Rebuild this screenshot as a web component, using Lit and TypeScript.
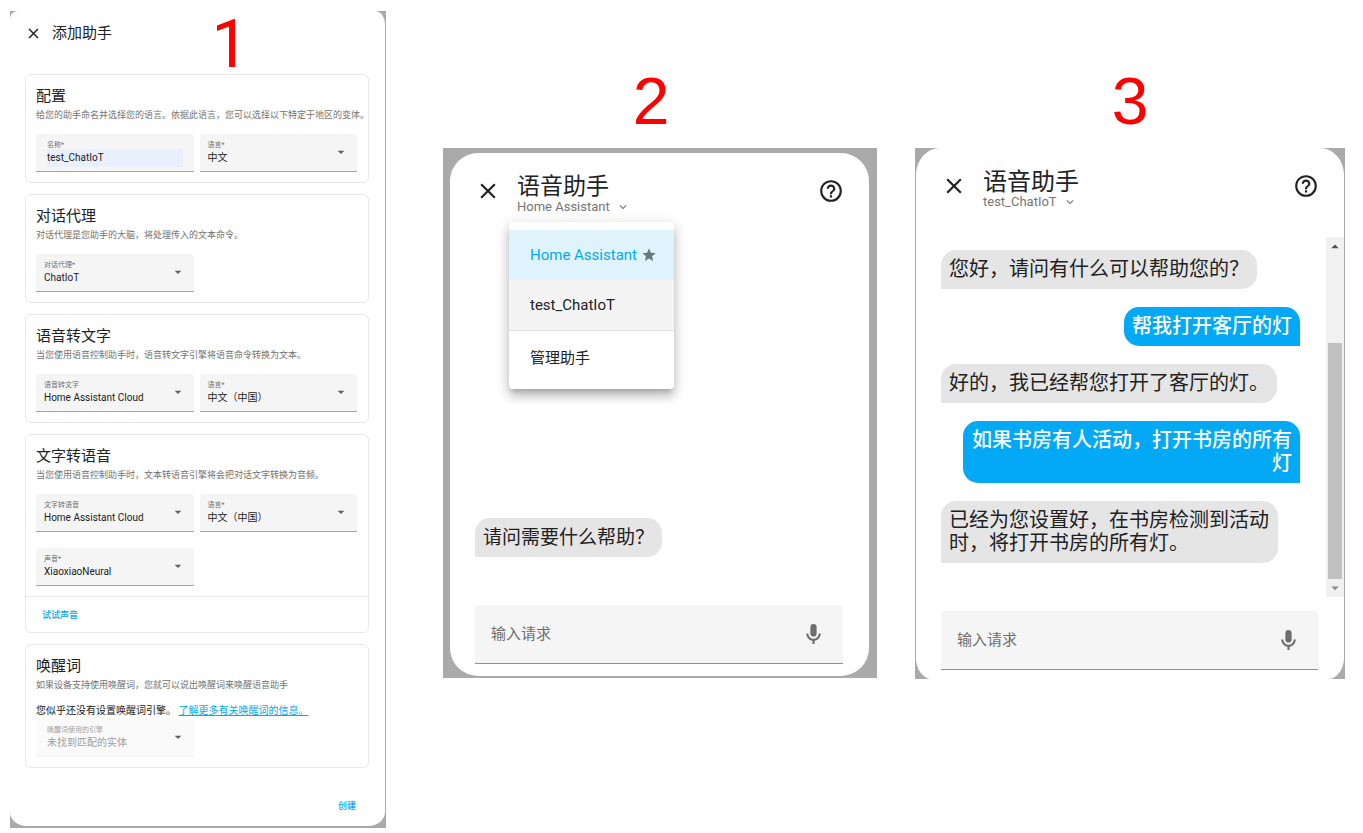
import { LitElement, html, css, nothing } from "lit";
import { customElement, property } from "lit/decorators.js";
import { classMap } from "lit/directives/class-map.js";

const mdiClose =
  "M19,6.41L17.59,5L12,10.59L6.41,5L5,6.41L10.59,12L5,17.59L6.41,19L12,13.41L17.59,19L19,17.59L13.41,12L19,6.41Z";
const mdiHelp =
  "M11,18H13V16H11V18M12,2A10,10 0 0,0 2,12A10,10 0 0,0 12,22A10,10 0 0,0 22,12A10,10 0 0,0 12,2M12,20C7.59,20 4,16.41 4,12C4,7.59 7.59,4 12,4C16.41,4 20,7.59 20,12C20,16.41 16.41,20 12,20M12,6A4,4 0 0,0 8,10H10A2,2 0 0,1 12,8A2,2 0 0,1 14,10C14,12 11,11.75 11,15H13C13,12.75 16,12.5 16,10A4,4 0 0,0 12,6Z";
const mdiMic =
  "M12,2A3,3 0 0,1 15,5V11A3,3 0 0,1 12,14A3,3 0 0,1 9,11V5A3,3 0 0,1 12,2M19,11C19,14.53 16.39,17.44 13,17.93V21H11V17.93C7.61,17.44 5,14.53 5,11H7A5,5 0 0,0 12,16A5,5 0 0,0 17,11H19Z";
const mdiStar =
  "M12,17.27L18.18,21L16.54,13.97L22,9.24L14.81,8.62L12,2L9.19,8.62L2,9.24L7.45,13.97L5.82,21L12,17.27Z";
const mdiChevronDown =
  "M7.41,8.58L12,13.17L16.59,8.58L18,10L12,16L6,10L7.41,8.58Z";
const mdiMenuDown = "M7,10L12,15L17,10H7Z";
const mdiMenuUp = "M7,15L12,10L17,15H7Z";

const icon = (path: string) =>
  html`<svg class="icon" viewBox="0 0 24 24" aria-hidden="true"><path d=${path}></path></svg>`;

const base = css`
  :host {
    display: block;
    font-family: Roboto, "Noto Sans CJK SC", sans-serif;
    color: #212121;
  }
  * {
    box-sizing: border-box;
  }
  h2, h3, p {
    margin: 0;
    font-weight: 400;
  }
  button, input, select {
    font: inherit;
    color: inherit;
    border: 0;
    margin: 0;
    padding: 0;
    background: none;
  }
  button {
    cursor: pointer;
  }
  .icon {
    display: block;
    width: 100%;
    height: 100%;
    fill: currentColor;
  }
`;

interface Message {
  who: "agent" | "user";
  text: string;
}

@customElement("assist-chat")
class AssistChat extends LitElement {
  @property() agent = "";
  @property({ attribute: false }) messages: Message[] = [];
  @property({ type: Boolean }) menu = false;
  @property({ type: Boolean, reflect: true }) cropped = false;

  static styles = [
    base,
    css`
      :host {
        --title: 23px;
        --message: 19px;
        --chat-height: 349px;
        padding: 5px 8px 2px 7px;
        background: #aaa;
      }
      :host([cropped]) {
        --title: 24px;
        --message: 20px;
        --chat-height: 360px;
        padding: 0 1px;
      }
      .dialog {
        display: flex;
        flex-direction: column;
        background: #fff;
        border-radius: 28px;
        padding-bottom: 12px;
      }
      :host([cropped]) .dialog {
        border-radius: 24px 24px 16px 16px / 27px 27px 21px 21px;
        padding-bottom: 9px;
      }
      .header {
        display: flex;
        align-items: flex-start;
        gap: 16px;
        height: 89px;
        padding: 21px 25px 0;
      }
      .icon-button {
        width: 26px;
        height: 26px;
        margin-top: 4px;
        flex: none;
      }
      .heading {
        position: relative;
        flex: 1;
      }
      .title {
        font-size: var(--title);
        line-height: 26px;
      }
      .picker {
        display: flex;
        align-items: center;
        gap: 5px;
        font-size: 13px;
        line-height: 14px;
        color: #757575;
      }
      .chevron {
        width: 16px;
        height: 14px;
      }
      .menu {
        position: absolute;
        top: 48px;
        left: -8px;
        z-index: 1;
        padding: 8px 0;
        border-radius: 4px;
        background: #fff;
        box-shadow: 0 5px 5px -3px rgba(0, 0, 0, 0.2),
          0 8px 10px 1px rgba(0, 0, 0, 0.14), 0 3px 14px 2px rgba(0, 0, 0, 0.12);
      }
      .item {
        display: flex;
        align-items: center;
        gap: 4px;
        width: 100%;
        height: 50px;
        padding: 0 17px 0 21px;
        font-size: 15px;
        white-space: nowrap;
      }
      .item.hovered {
        background: #f4f4f4;
      }
      .item.selected {
        color: #03a9f4;
        background: #dff3fc;
      }
      .star {
        width: 16px;
        height: 16px;
        color: #667a84;
      }
      .divider {
        height: 1px;
        background: #e0e0e0;
      }
      .chat {
        display: flex;
        gap: 26px;
        min-height: var(--chat-height);
        padding-left: 25px;
      }
      .messages {
        flex: 1;
        display: flex;
        flex-direction: column;
        justify-content: flex-end;
        align-items: flex-start;
        gap: 18px;
        padding-bottom: 34px;
      }
      .bubble {
        max-width: 94%;
        padding: 8px;
        border-radius: 15px;
        font-size: var(--message);
        line-height: 23px;
        background: #e5e5e5;
      }
      .bubble.agent {
        border-bottom-left-radius: 0;
      }
      .bubble.user {
        align-self: flex-end;
        border-bottom-right-radius: 0;
        text-align: right;
        font-weight: 500;
        color: #fff;
        background: #03a9f4;
      }
      .scrollbar {
        display: flex;
        flex-direction: column;
        width: 18px;
        background: #f1f1f1;
        color: #505050;
      }
      .arrow {
        width: 18px;
        height: 18px;
      }
      .arrow.end {
        color: #8a8a8a;
      }
      .thumb {
        flex: 1;
        margin: 88px 2px 0;
        background: #c1c1c1;
      }
      .request {
        display: flex;
        align-items: center;
        height: 59px;
        margin: 14px 26px 0 25px;
        padding: 0 17px 0 16px;
        border-bottom: 1px solid #8e8e8e;
        border-radius: 4px 4px 0 0;
        background: #f5f5f5;
      }
      .request-input {
        flex: 1;
        min-width: 0;
        font-size: 15px;
        line-height: 24px;
        outline: none;
      }
      .request-input::placeholder {
        color: #6f6f6f;
        opacity: 1;
      }
      .mic {
        width: 25px;
        height: 25px;
        color: #6e6e6e;
      }
    `,
  ];

  render() {
    return html`
      <section class="dialog">
        <header class="header">
          <button class="icon-button" aria-label="关闭">${icon(mdiClose)}</button>
          <div class="heading">
            <h2 class="title">语音助手</h2>
            <button class="picker" aria-haspopup="menu">
              ${this.agent}<span class="chevron">${icon(mdiChevronDown)}</span>
            </button>
            ${this.menu
              ? html`<div class="menu" role="menu">
                  <button class="item selected" role="menuitem">
                    Home Assistant<span class="star">${icon(mdiStar)}</span>
                  </button>
                  <button class="item hovered" role="menuitem">test_ChatIoT</button>
                  <div class="divider"></div>
                  <button class="item" role="menuitem">管理助手</button>
                </div>`
              : nothing}
          </div>
          <button class="icon-button" aria-label="帮助">${icon(mdiHelp)}</button>
        </header>
        <div class="chat">
          <div class="messages">
            ${this.messages.map(
              (m) => html`<p class=${classMap({ bubble: true, [m.who]: true })}>${m.text}</p>`
            )}
          </div>
          ${this.cropped
            ? html`<div class="scrollbar" aria-hidden="true">
                <span class="arrow">${icon(mdiMenuUp)}</span>
                <span class="thumb"></span>
                <span class="arrow end">${icon(mdiMenuDown)}</span>
              </div>`
            : html`<div></div>`}
        </div>
        <div class="request">
          <input class="request-input" type="text" aria-label="输入请求" placeholder="输入请求" />
          <button class="mic" aria-label="语音输入">${icon(mdiMic)}</button>
        </div>
      </section>
    `;
  }
}

@customElement("assistant-form")
class AssistantForm extends LitElement {
  static styles = [
    base,
    css`
      :host {
        padding: 0 1px 2px 0;
        background: #aaa;
      }
      .dialog {
        background: #fff;
        border-radius: 8px 10px 17px 17px / 8px 14px 14px 14px;
        padding: 0 16px 3px 15px;
      }
      .header {
        display: flex;
        align-items: center;
        gap: 10px;
        height: 44px;
        margin-bottom: 19px;
      }
      .close {
        width: 17px;
        height: 17px;
      }
      .title {
        font-size: 15px;
        line-height: 20px;
      }
      .cards {
        display: flex;
        flex-direction: column;
        gap: 11px;
      }
      .card {
        border: 1px solid #e8e8e8;
        border-radius: 6px;
      }
      .content {
        padding: 11px 11px 10px 10px;
      }
      .description {
        margin-top: 3px;
        font-size: 9px;
        line-height: 13px;
        white-space: nowrap;
        color: #727272;
      }
      .fields {
        display: grid;
        grid-template-columns: 1fr 1fr;
        gap: 16px 6px;
        margin-top: 12px;
      }
      .fields.tight {
        margin-top: 0;
      }
      .field {
        position: relative;
        display: flex;
        flex-direction: column;
        height: 38px;
        padding: 8px 8px 0;
        border-bottom: 1px solid #a4a4a4;
        border-radius: 3px 3px 0 0;
        background: #f5f5f5;
      }
      .field.inset {
        padding: 8px 11px 0;
      }
      .field.disabled {
        border-bottom-color: #f0f0f0;
        background: #fafafa;
      }
      .label {
        font-size: 7px;
        line-height: 7px;
        color: #6f6f6f;
      }
      .control {
        width: 100%;
        height: 18px;
        font-size: 10px;
        line-height: 18px;
        appearance: none;
        border-radius: 0;
        outline: none;
      }
      .control.filled {
        background: #e8f0fe;
      }
      .disabled .label,
      .disabled .control {
        color: #a0a0a0;
        opacity: 1;
      }
      .caret {
        position: absolute;
        right: 8px;
        top: 10px;
        width: 16px;
        height: 16px;
        color: #616161;
        pointer-events: none;
      }
      .actions {
        height: 36px;
        padding: 0 16px;
        border-top: 1px solid #e8e8e8;
      }
      .text-button {
        height: 35px;
        font-size: 9px;
        font-weight: 500;
        color: #03a9f4;
      }
      .notice {
        margin-top: 11px;
        font-size: 10px;
        line-height: 16px;
      }
      .link {
        color: #03a9f4;
      }
      .footer {
        display: flex;
        justify-content: flex-end;
        padding: 20px 13px 0;
      }
    `,
  ];

  private select(id: string, label: string, value: string, disabled = false) {
    return html`<div class=${classMap({ field: true, disabled, inset: disabled })}>
      <label class="label" for=${id}>${label}</label>
      <select class="control" id=${id} ?disabled=${disabled}>
        <option>${value}</option>
      </select>
      <span class="caret">${icon(mdiMenuDown)}</span>
    </div>`;
  }

  private card(title: string, description: string, body: unknown, actions: unknown = nothing) {
    return html`<section class="card">
      <div class="content">
        <h3 class="title">${title}</h3>
        <p class="description">${description}</p>
        ${body}
      </div>
      ${actions}
    </section>`;
  }

  render() {
    return html`
      <section class="dialog">
        <header class="header">
          <button class="close" aria-label="关闭">${icon(mdiClose)}</button>
          <h2 class="title">添加助手</h2>
        </header>
        <div class="cards">
          ${this.card(
            "配置",
            "给您的助手命名并选择您的语言。依据此语言，您可以选择以下特定于地区的变体。",
            html`<div class="fields">
              <div class="field inset">
                <label class="label" for="name">名称*</label>
                <input class="control filled" id="name" type="text" value="test_ChatIoT" />
              </div>
              ${this.select("language", "语言*", "中文")}
            </div>`
          )}
          ${this.card(
            "对话代理",
            "对话代理是您助手的大脑，将处理传入的文本命令。",
            html`<div class="fields">${this.select("agent", "对话代理*", "ChatIoT")}</div>`
          )}
          ${this.card(
            "语音转文字",
            "当您使用语音控制助手时，语音转文字引擎将语音命令转换为文本。",
            html`<div class="fields">
              ${this.select("stt", "语音转文字", "Home Assistant Cloud")}
              ${this.select("stt-language", "语言*", "中文（中国）")}
            </div>`
          )}
          ${this.card(
            "文字转语音",
            "当您使用语音控制助手时，文本转语音引擎将会把对话文字转换为音频。",
            html`<div class="fields">
              ${this.select("tts", "文字转语音", "Home Assistant Cloud")}
              ${this.select("tts-language", "语言*", "中文（中国）")}
              ${this.select("voice", "声音*", "XiaoxiaoNeural")}
            </div>`,
            html`<div class="actions"><button class="text-button">试试声音</button></div>`
          )}
          ${this.card(
            "唤醒词",
            "如果设备支持使用唤醒词，您就可以说出唤醒词来唤醒语音助手",
            html`<p class="notice">
                您似乎还没有设置唤醒词引擎。
                <a class="link" href="#wake-word">了解更多有关唤醒词的信息。</a>
              </p>
              <div class="fields tight">
                ${this.select("wake", "唤醒词使用的引擎", "未找到匹配的实体", true)}
              </div>`
          )}
        </div>
        <footer class="footer"><button class="text-button">创建</button></footer>
      </section>
    `;
  }
}

@customElement("app-root")
class AppRoot extends LitElement {
  static styles = css`
    :host {
      display: block;
      background: #fff;
    }
    .steps {
      display: grid;
      grid-template-columns: 395fr 434fr 430fr;
      column-gap: 38px;
      align-items: start;
      padding: 11px 18px 5px 10px;
    }
    .step {
      position: relative;
      min-width: 0;
      margin: 0;
      padding-top: 53px;
    }
    .step.form {
      padding: 0 19px 0 0;
    }
    .number {
      height: 84px;
      font: 66px/74px "Liberation Sans", Arial, sans-serif;
      text-align: center;
      color: #f00;
    }
    .form .number {
      position: absolute;
      top: -3px;
      left: 51%;
      font-family: Roboto, sans-serif;
    }
    .menu-open .number {
      padding-right: 18px;
    }
  `;

  private opening: Message[] = [{ who: "agent", text: "请问需要什么帮助？" }];

  private conversation: Message[] = [
    { who: "agent", text: "您好，请问有什么可以帮助您的？" },
    { who: "user", text: "帮我打开客厅的灯" },
    { who: "agent", text: "好的，我已经帮您打开了客厅的灯。" },
    { who: "user", text: "如果书房有人活动，打开书房的所有灯" },
    { who: "agent", text: "已经为您设置好，在书房检测到活动时，将打开书房的所有灯。" },
  ];

  render() {
    return html`
      <main class="steps">
        <figure class="step form">
          <assistant-form></assistant-form>
          <figcaption class="number">1</figcaption>
        </figure>
        <figure class="step menu-open">
          <figcaption class="number">2</figcaption>
          <assist-chat agent="Home Assistant" menu .messages=${this.opening}></assist-chat>
        </figure>
        <figure class="step">
          <figcaption class="number">3</figcaption>
          <assist-chat agent="test_ChatIoT" cropped .messages=${this.conversation}></assist-chat>
        </figure>
      </main>
    `;
  }
}
